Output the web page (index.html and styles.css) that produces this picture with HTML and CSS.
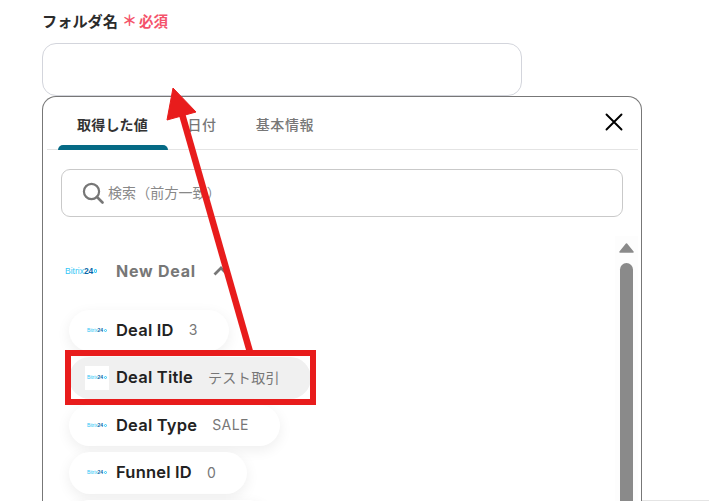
FILE: index.html
```html
<!DOCTYPE html>
<html lang="ja">
<head>
<meta charset="utf-8">
<title>フォルダ名</title>
<link rel="stylesheet" href="styles.css">
</head>
<body>
<main class="page">
  <div class="label-row">
    <span class="label">フォルダ名</span>
    <span class="star">＊</span>
    <span class="required">必須</span>
  </div>
  <div class="field"></div>
  <section class="panel">
    <header class="tabs">
      <div class="tab tab-active">取得した値</div>
      <div class="tab">日付</div>
      <div class="tab">基本情報</div>
      <svg class="close" viewBox="0 0 18 18" width="18" height="18"><path d="M1.5 1.5 16.5 16.5M16.5 1.5 1.5 16.5" stroke="#000" stroke-width="1.9" stroke-linecap="round" fill="none"/></svg>
    </header>
    <div class="search">
      <svg class="search-icon" viewBox="0 0 22 22" width="22" height="22"><circle cx="9.5" cy="9.5" r="7.6" stroke="#777" stroke-width="2.2" fill="none"/><path d="M15 15 20.5 20.5" stroke="#777" stroke-width="2.6" stroke-linecap="round"/></svg>
      <span class="search-text">検索（前方一致）</span>
    </div>
    <div class="content">
      <div class="list">
        <div class="group">
          <span class="logo logo-big"><i>Bitrix</i><b>24</b><u></u></span>
          <span class="group-name">New Deal</span>
          <svg class="chevron" viewBox="0 0 16 10" width="16" height="10"><path d="M1.5 8.5 8 2l6.500 6.500" stroke="#777" stroke-width="2.800" fill="none"/></svg>
        </div>
        <div class="pill">
          <span class="pill-icon"><span class="logo"><i>Bitrix</i><b>24</b><u></u></span></span>
          <span class="key">Deal ID</span><span class="val">3</span>
        </div>
        <div class="pill pill-hover">
          <span class="pill-icon pill-icon-box"><span class="logo"><i>Bitrix</i><b>24</b><u></u></span></span>
          <span class="key">Deal Title</span><span class="val">テスト取引</span>
        </div>
        <div class="pill">
          <span class="pill-icon"><span class="logo"><i>Bitrix</i><b>24</b><u></u></span></span>
          <span class="key">Deal Type</span><span class="val">SALE</span>
        </div>
        <div class="pill">
          <span class="pill-icon"><span class="logo"><i>Bitrix</i><b>24</b><u></u></span></span>
          <span class="key">Funnel ID</span><span class="val">0</span>
        </div>
        <div class="pill pill-next"></div>
      </div>
      <div class="scrollbar">
        <svg class="scroll-up" viewBox="0 0 15 10" width="15" height="10"><path d="M7.500 1 14 9H1Z" fill="#8a8a8a" stroke="#8a8a8a" stroke-width="1.500" stroke-linejoin="round"/></svg>
        <span class="scroll-thumb"></span>
      </div>
    </div>
  </section>
</main>
<div class="edge-line"></div>
<div class="highlight"></div>
<svg class="arrow" viewBox="0 0 709 501" width="709" height="501">
  <path d="M250 352 182 114" stroke="#e81c1c" stroke-width="6.500" fill="none"/>
  <path d="M173 88 196 112 167 120Z" fill="#e81c1c" stroke="#e81c1c" stroke-width="1"/>
</svg>
</body>
</html>
```
FILE: styles.css
```css
* { box-sizing: border-box; }
html, body { margin: 0; padding: 0; }
body {
  position: relative;
  width: 709px;
  height: 501px;
  overflow: hidden;
  background: #fff;
  font-family: Inter, "Noto Sans CJK JP", sans-serif;
  color: #222;
}
.page {
  display: flex;
  flex-direction: column;
  height: 501px;
  padding: 8px 0 0 42px;
}
.label-row {
  display: flex;
  align-items: center;
  height: 24px;
  margin-bottom: 11px;
}
.label {
  font-size: 15.200px;
  font-weight: 700;
  color: #2b2b2b;
}
.star {
  margin-left: 4px;
  font-size: 15px;
  font-weight: 700;
  line-height: 24px;
  color: #f4536b;
  position: relative;
  top: 1px;
}
.required {
  margin-left: 2px;
  font-size: 14.500px;
  font-weight: 700;
  color: #f4536b;
}
.field {
  width: 480px;
  height: 53px;
  flex: none;
  border: 1px solid #d3d5dc;
  border-radius: 14px;
  background: #fff;
}
.panel {
  width: 600px;
  flex: 1;
  min-height: 0;
  overflow: hidden;
  padding: 0 3px 0 4px;
  border: 1px solid #777;
  border-bottom: 0;
  border-radius: 14px 14px 0 0;
  background: #fff;
}
.tabs {
  display: flex;
  align-items: center;
  height: 53px;
  padding: 0 0 0 11px;
  border-bottom: 1px solid #e4e4e4;
}
.tab {
  height: 53px;
  padding: 18px 19.500px 0;
  font-size: 14px;
  line-height: 20px;
  font-weight: 500;
  letter-spacing: 0.600px;
  color: #777;
}
.tab-active {
  position: relative;
  color: #333;
  font-weight: 700;
  width: 110px;
  padding-left: 19px;
  letter-spacing: 0.200px;
  white-space: nowrap;
}
.tab-active::after {
  content: "";
  position: absolute;
  left: 0;
  right: 0;
  bottom: 0;
  height: 5px;
  border-radius: 5px 5px 0 0;
  background: #056a85;
}
.close {
  margin-left: auto;
  margin-right: 15px;
  position: relative;
  top: -1px;
}
.search {
  display: flex;
  align-items: center;
  width: 562px;
  height: 48px;
  margin: 19px 0 0 14px;
  padding-left: 20px;
  border: 1px solid #c9c9c9;
  border-radius: 9px;
}
.search-icon { flex: none; margin-top: -1px; }
.search-text {
  margin-left: 4px;
  margin-top: -2px;
  font-size: 14px;
  letter-spacing: 0.100px;
  color: #888;
}
.content {
  display: flex;
  justify-content: space-between;
  margin-top: 19px;
  height: 270px;
}
.list {
  display: flex;
  flex-direction: column;
  align-items: flex-start;
  gap: 6px;
  padding: 0 0 0 18px;
}
.group {
  display: flex;
  align-items: center;
  flex: none;
  height: 68px;
  margin-bottom: -0.500px;
  padding-top: 2px;
}
.logo {
  display: inline-flex;
  align-items: center;
  font-family: "Liberation Sans", sans-serif;
  font-size: 5px;
  line-height: 1;
  white-space: nowrap;
  letter-spacing: -0.100px;
}
.logo i { font-style: normal; color: #2fc6f6; }
.logo b { color: #0b66a8; }
.logo u {
  width: 3px;
  height: 3px;
  margin-left: 1px;
  border: 0.500px solid #2fc6f6;
  border-radius: 50%;
}
.logo-big {
  font-size: 8.500px;
  letter-spacing: 0;
  width: 32px;
}
.logo-big u { width: 4px; height: 4px; }
.group-name {
  margin-left: 19px;
  font-size: 16px;
  font-weight: 700;
  letter-spacing: 0.750px;
  color: #777;
}
.chevron {
  margin-left: 17px;
}
.pill {
  display: flex;
  align-items: center;
  flex: none;
  height: 41.500px;
  margin-left: 4px;
  padding: 0 31px 0 16px;
  border-radius: 21px;
  background: #fff;
  box-shadow: 0 4px 14px rgba(0, 0, 0, 0.07);
}
.pill-hover {
  background: #f0f0f0;
  box-shadow: none;
}
.pill-next { width: 200px; }
.pill-icon {
  display: flex;
  align-items: center;
  justify-content: center;
  width: 24px;
  height: 24px;
  flex: none;
}
.pill-icon-box { background: #fff; }
.key {
  margin-left: 7px;
  margin-top: -1px;
  font-size: 16.500px;
  font-weight: 600;
  letter-spacing: 0.200px;
  color: #222;
  white-space: nowrap;
}
.val {
  margin-left: 15px;
  margin-top: -1px;
  font-size: 14px;
  color: #777;
  white-space: nowrap;
  letter-spacing: 0.400px;
}
.scrollbar {
  display: flex;
  flex-direction: column;
  align-items: center;
  flex: none;
  width: 23px;
  height: 270px;
  background: #fdfdfd;
}
.scroll-up {
  flex: none;
  margin-top: 7px;
}
.scroll-thumb {
  width: 13px;
  flex: 1;
  margin-top: 10px;
  border-radius: 7px 7px 0 0;
  background: #8a8a8a;
}
.edge-line {
  position: absolute;
  left: 642px;
  right: 0;
  bottom: 0;
  height: 1px;
  background: #e4e4e4;
}
.highlight {
  position: absolute;
  left: 65px;
  top: 350px;
  width: 251px;
  height: 55px;
  border: 6px solid #e81c1c;
}
.arrow {
  position: absolute;
  left: 0;
  top: 0;
}
```
